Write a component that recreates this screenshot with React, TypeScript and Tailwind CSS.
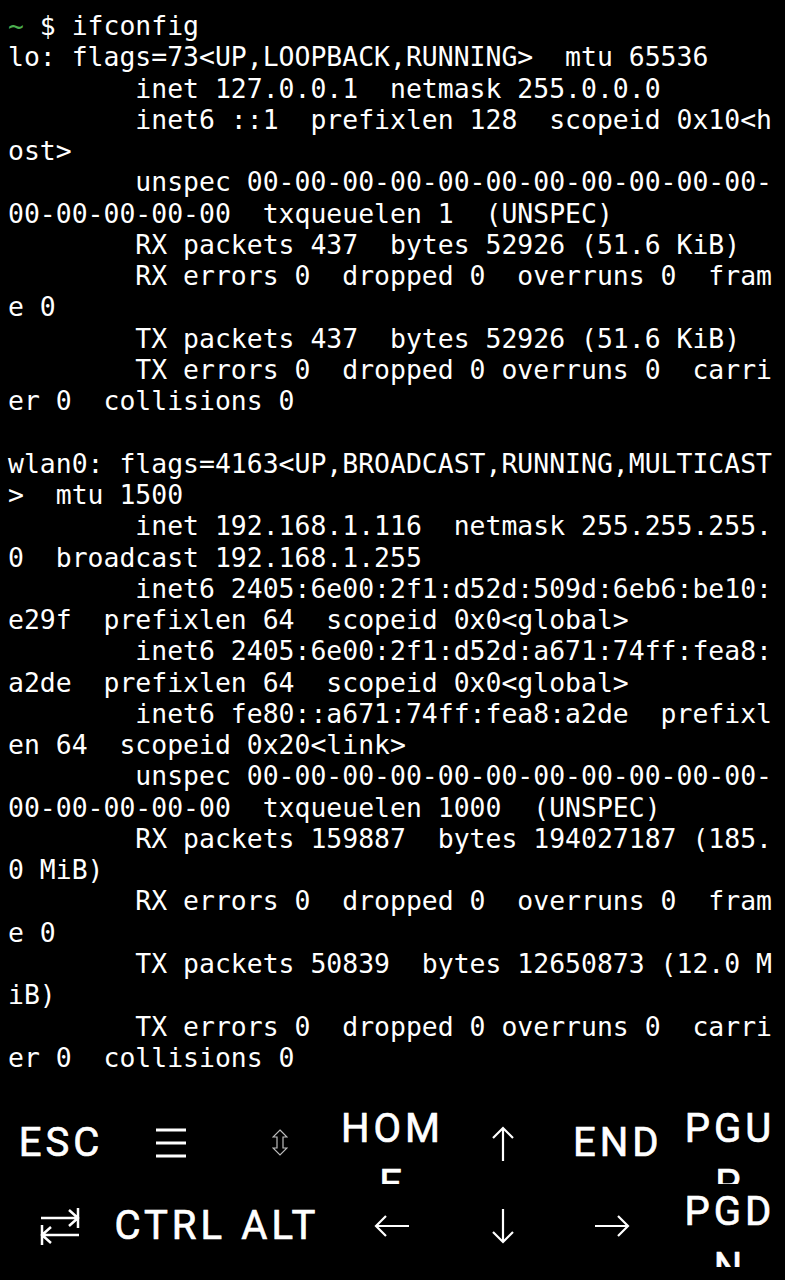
import type { ReactNode } from 'react';

const lines = [
  'lo: flags=73<UP,LOOPBACK,RUNNING>  mtu 65536',
  '        inet 127.0.0.1  netmask 255.0.0.0',
  '        inet6 ::1  prefixlen 128  scopeid 0x10<h',
  'ost>',
  '        unspec 00-00-00-00-00-00-00-00-00-00-00-',
  '00-00-00-00-00  txqueuelen 1  (UNSPEC)',
  '        RX packets 437  bytes 52926 (51.6 KiB)',
  '        RX errors 0  dropped 0  overruns 0  fram',
  'e 0',
  '        TX packets 437  bytes 52926 (51.6 KiB)',
  '        TX errors 0  dropped 0 overruns 0  carri',
  'er 0  collisions 0',
  '',
  'wlan0: flags=4163<UP,BROADCAST,RUNNING,MULTICAST',
  '>  mtu 1500',
  '        inet 192.168.1.116  netmask 255.255.255.',
  '0  broadcast 192.168.1.255',
  '        inet6 2405:6e00:2f1:d52d:509d:6eb6:be10:',
  'e29f  prefixlen 64  scopeid 0x0<global>',
  '        inet6 2405:6e00:2f1:d52d:a671:74ff:fea8:',
  'a2de  prefixlen 64  scopeid 0x0<global>',
  '        inet6 fe80::a671:74ff:fea8:a2de  prefixl',
  'en 64  scopeid 0x20<link>',
  '        unspec 00-00-00-00-00-00-00-00-00-00-00-',
  '00-00-00-00-00  txqueuelen 1000  (UNSPEC)',
  '        RX packets 159887  bytes 194027187 (185.',
  '0 MiB)',
  '        RX errors 0  dropped 0  overruns 0  fram',
  'e 0',
  '        TX packets 50839  bytes 12650873 (12.0 M',
  'iB)',
  '        TX errors 0  dropped 0 overruns 0  carri',
  'er 0  collisions 0',
];

function Key({ children, className = '' }: { children: ReactNode; className?: string }) {
  return (
    <div
      className={`flex h-[83px] items-center justify-center overflow-hidden text-[40px] font-normal leading-[56px] tracking-[0.1em] text-white [-webkit-text-stroke:0.7px_white] ${className}`}
    >
      {children}
    </div>
  );
}

function WrapKey({ top, bottom, className = '' }: { top: string; bottom: string; className?: string }) {
  return (
    <div
      className={`flex h-[83px] flex-col items-center overflow-hidden text-[40px] font-normal leading-[56px] tracking-[0.1em] text-white [-webkit-text-stroke:0.7px_white] ${className}`}
    >
      <span>{top}</span>
      <span>{bottom}</span>
    </div>
  );
}

// thin arrow pointing up, rotated for the other directions
function Arrow({ className = '' }: { className?: string }) {
  return (
    <svg width="24" height="36" viewBox="0 0 24 36" className={className}>
      <path d="M12 2V35M2 12L12 2L22 12" fill="none" stroke="white" strokeWidth="2.2" />
    </svg>
  );
}

export default function App() {
  return (
    <div className="flex h-[1280px] w-full flex-col overflow-hidden bg-black">
      {/* terminal output */}
      <div
        className="h-[1101px] overflow-hidden whitespace-pre pl-[8px] pt-[10px] text-[26.45px] leading-[31.27px] text-white"
        style={{ fontFamily: '"DejaVu Sans Mono", "Liberation Mono", monospace' }}
      >
        <div>
          <span className="text-[#4caf50]">~</span> $ ifconfig
        </div>
        {lines.map((l, i) => (
          <div key={i}>{l === '' ? ' ' : l}</div>
        ))}
      </div>

      {/* extra keys */}
      <div className="grid grid-cols-7" style={{ fontFamily: 'Roboto, "Noto Sans", sans-serif' }}>
        <Key className="pl-[10px]">ESC</Key>
        <Key>
          <svg width="32" height="30" viewBox="0 0 32 30" className="ml-[6px]">
            <path d="M1 2h30M1 15h30M1 28h30" stroke="white" strokeWidth="3" />
          </svg>
        </Key>
        <Key>
          <svg width="16" height="27" viewBox="0 0 16 27">
            <path
              d="M8 1 L15 8 H11 V19 H15 L8 26 L1 19 H5 V8 H1 Z"
              fill="none"
              stroke="#bdbdbd"
              strokeWidth="1.2"
            />
          </svg>
        </Key>
        <WrapKey top="HOM" bottom="E" />
        <Key>
          <Arrow className="-ml-[4px] mt-[3px]" />
        </Key>
        <Key className="pl-[2px]">END</Key>
        <WrapKey top="PGU" bottom="P" className="pl-[2px]" />

        <Key>
          <svg width="40" height="38" viewBox="0 0 40 38" className="ml-[8px]">
            <path
              d="M1 11h37M29 3l9 8-9 8M38 1v20M2 28h37M11 20l-9 8 9 8M2 18v20"
              fill="none"
              stroke="white"
              strokeWidth="2.5"
            />
          </svg>
        </Key>
        <Key className="pl-[4px]">CTRL</Key>
        <Key>ALT</Key>
        <Key>
          <Arrow className="-rotate-90" />
        </Key>
        <Key>
          <Arrow className="-ml-[4px] rotate-180" />
        </Key>
        <Key>
          <Arrow className="-ml-[10px] rotate-90" />
        </Key>
        <WrapKey top="PGD" bottom="N" className="pl-[2px]" />
      </div>
    </div>
  );
}
